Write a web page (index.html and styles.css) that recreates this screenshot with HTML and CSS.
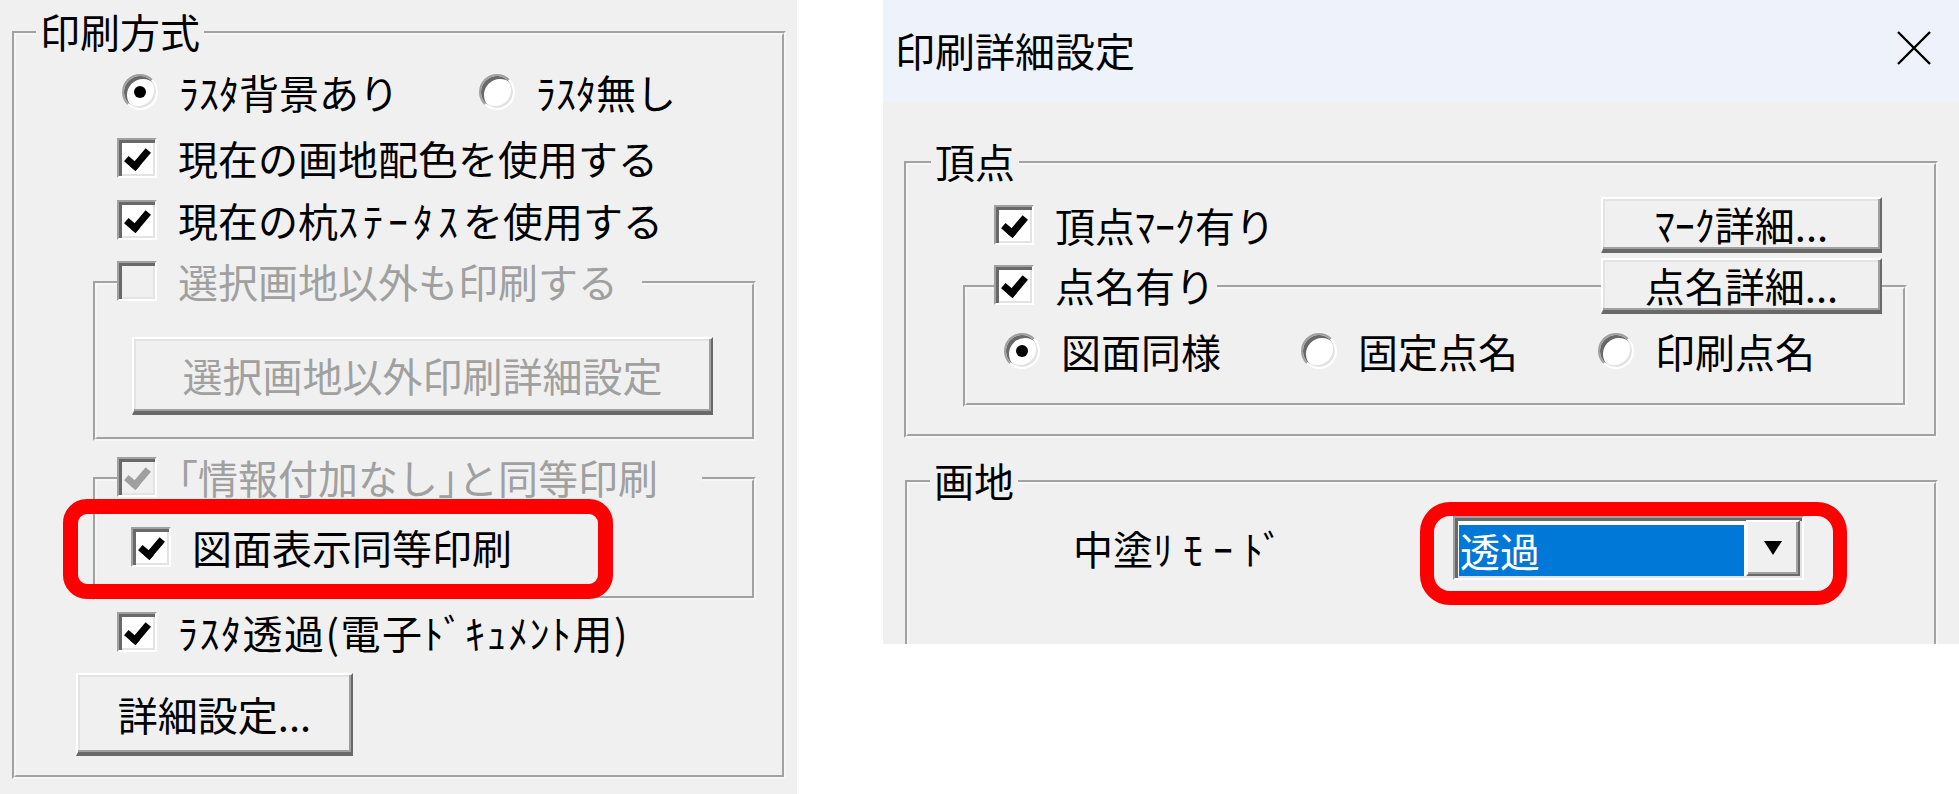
FILE: index.html
```html
<!DOCTYPE html>
<html lang="ja">

<head>
    <meta charset="UTF-8">
    <meta name="viewport" content="width=device-width, initial-scale=1.0">
    <title>印刷方式 / 印刷詳細設定</title>
    <link rel="stylesheet" href="styles.css">
</head>

<body>
    <!-- 左: 印刷方式 -->
    <div class="window print-mode">
        <fieldset class="group group-main">
            <legend class="main-legend">印刷方式</legend>

            <div class="radio-row">
                <label class="opt"><span class="radio on"></span>ﾗｽﾀ背景あり</label>
                <label class="opt"><span class="radio"></span>ﾗｽﾀ無し</label>
            </div>

            <label class="check-row row-color"><span class="check on"></span>現在の画地配色を使用する</label>
            <label class="check-row row-status"><span class="check on"></span><span>現在の杭<span class="kana-wide">ｽﾃｰﾀｽ</span>を使用する</span></label>

            <fieldset class="group sub-other">
                <legend class="check-legend pad-a">
                    <span class="check-row disabled"><span class="check"></span>選択画地以外も印刷する</span>
                </legend>
                <button class="btn btn-other" disabled>選択画地以外印刷詳細設定</button>
            </fieldset>

            <fieldset class="group sub-same">
                <legend class="check-legend pad-b">
                    <span class="check-row disabled"><span class="check on"></span>｢情報付加なし｣と同等印刷</span>
                </legend>
                <label class="check-row row-view"><span class="check on"></span>図面表示同等印刷</label>
            </fieldset>

            <label class="check-row row-raster"><span class="check on"></span><span class="raster-text">ﾗｽﾀ透過(電子ﾄﾞｷｭﾒﾝﾄ用)</span></label>

            <button class="btn btn-detail">詳細設定...</button>
        </fieldset>

        <!-- 赤枠 -->
        <div class="mark mark-view"></div>
    </div>

    <!-- 右: 印刷詳細設定 -->
    <div class="window detail">
        <div class="titlebar">
            <span class="title">印刷詳細設定</span>
            <svg class="close" width="36" height="36" viewBox="0 0 36 36">
                <path d="M2 2 L34 34 M34 2 L2 34" stroke="#000" stroke-width="2.4" fill="none" />
            </svg>
        </div>

        <div class="dialog-body">
            <fieldset class="group group-vertex">
                <legend class="vertex-legend">頂点</legend>
                <div class="vertex-grid">
                    <label class="check-row row-mark"><span class="check on"></span>頂点ﾏｰｸ有り</label>
                    <button class="btn btn-side">ﾏｰｸ詳細...</button>

                    <fieldset class="group group-name">
                        <legend class="check-legend pad-c">
                            <span class="check-row"><span class="check on"></span>点名有り</span>
                        </legend>
                        <div class="radio-row name-radios">
                            <label class="opt"><span class="radio on"></span>図面同様</label>
                            <label class="opt"><span class="radio"></span>固定点名</label>
                            <label class="opt"><span class="radio"></span>印刷点名</label>
                        </div>
                    </fieldset>
                    <button class="btn btn-side btn-name">点名詳細...</button>
                </div>
            </fieldset>

            <fieldset class="group group-fill">
                <legend class="fill-legend">画地</legend>
                <div class="fill-row">
                    <span class="fill-label">中塗<span class="kana-wide fill-kana">ﾘﾓｰ</span>ﾄﾞ</span>
                    <div class="combo">
                        <span class="combo-value">透過</span>
                        <span class="combo-arrow">
                            <svg width="20" height="16" viewBox="0 0 20 16">
                                <path d="M1 1 H19 L10 15 Z" fill="#000" />
                            </svg>
                        </span>
                    </div>
                </div>
            </fieldset>
        </div>

        <!-- 赤枠 -->
        <div class="mark mark-combo"></div>
    </div>
</body>

</html>
```

FILE: styles.css
```css
body {
    margin: 0;
    background: #fff;
    display: flex;
    align-items: flex-start;
    gap: 86px;
    font-family: "Noto Sans CJK JP", sans-serif;
    font-size: 40px;
    line-height: 40px;
    color: #000;
    overflow: hidden;
}

.window {
    position: relative;
    flex: none;
    background: #f0f0f0;
    overflow: hidden;
}

/* グループ枠 */
.group {
    border: 4px groove #f6f6f6;
    margin: 0;
    padding: 0;
    min-width: 0;
    box-sizing: border-box;
}

.group > legend {
    padding: 0 4px 4px;
    line-height: 40px;
}

.group > legend.check-legend {
    padding-left: 0;
}

/* 半角カナの字間 */
.kana-wide {
    letter-spacing: 5px;
}

.raster-text {
    letter-spacing: 1.5px;
}

/* チェックボックス */
.check-row {
    display: flex;
    align-items: center;
    gap: 21px;
    height: 40px;
    white-space: nowrap;
}

.check {
    width: 40px;
    height: 40px;
    box-sizing: border-box;
    border: 2px solid;
    border-color: #a0a0a0 #fff #fff #a0a0a0;
    box-shadow: inset 3px 3px 0 #696969, inset -2px -2px 0 #e3e3e3;
    background: #fff;
    position: relative;
    flex: none;
}

.check.on::after {
    content: "";
    position: absolute;
    left: 11px;
    top: 5px;
    width: 8px;
    height: 17px;
    border: solid #000;
    border-width: 0 7px 7px 0;
    transform: rotate(40deg);
    transform-origin: center;
}

.disabled {
    color: #a0a0a0;
}

.disabled .check {
    background: #f0f0f0;
}

.disabled .check.on::after {
    border-color: #a0a0a0;
}

/* ラジオボタン */
.radio-row {
    display: flex;
    align-items: center;
    gap: 80px;
    height: 40px;
}

.opt {
    display: flex;
    align-items: center;
    gap: 21px;
    white-space: nowrap;
}

.radio {
    width: 36px;
    height: 36px;
    box-sizing: border-box;
    border-radius: 50%;
    border: 2px solid;
    border-color: #a0a0a0 #fff #fff #a0a0a0;
    box-shadow: inset 3px 3px 0 #696969, inset -2px -2px 0 #e3e3e3;
    background: #fff;
    position: relative;
    flex: none;
}

.radio.on::after {
    content: "";
    position: absolute;
    left: 10px;
    top: 10px;
    width: 12px;
    height: 12px;
    border-radius: 50%;
    background: #000;
}

/* ボタン */
.btn {
    display: block;
    box-sizing: border-box;
    font: inherit;
    color: #000;
    background: #f0f0f0;
    border: 2px solid;
    border-color: #fff #696969 #696969 #fff;
    border-bottom-width: 4px;
    box-shadow: inset -2px -2px 0 #a0a0a0, inset 2px 2px 0 #e3e3e3;
    padding: 0;
    text-align: center;
    white-space: nowrap;
}

.btn:disabled {
    color: #a0a0a0;
}

/* 左: 印刷方式 */
.print-mode {
    width: 797px;
    height: 794px;
}

.group-main {
    margin: 11px 11px 0 12px;
    height: 768px;
}

.main-legend {
    margin-left: 20px;
}

.group-main > .radio-row {
    margin: 17px 0 0 106px;
}

.group-main > .check-row {
    margin-left: 101px;
}

.row-color {
    margin-top: 26px;
}

.row-status {
    margin-top: 22px;
}

.sub-other {
    margin: 21px 26px 0 77px;
    height: 180px;
}

.sub-same {
    margin: 16px 26px 0 77px;
    height: 143px;
}

.group > .pad-a {
    margin-left: 20px;
    padding-right: 24px;
}

.group > .pad-b {
    margin-left: 20px;
    padding-right: 44px;
}

.btn-other {
    margin: 32px 0 0 35px;
    width: 581px;
    height: 78px;
}

.row-view {
    margin: 26px 0 0 34px;
}

.group-main > .row-raster {
    margin-top: 12px;
}

.btn-detail {
    margin: 21px 0 0 60px;
    width: 277px;
    height: 83px;
}

/* 右: 印刷詳細設定 */
.detail {
    width: 1076px;
    height: 644px;
}

.titlebar {
    height: 102px;
    box-sizing: border-box;
    padding: 30px 27px 0 12px;
    background: #eef2fa;
    display: flex;
    justify-content: space-between;
    align-items: flex-start;
}

.title {
    line-height: 40px;
}

.dialog-body {
    height: 542px;
    overflow: hidden;
}

.group-vertex {
    margin: 39px 21px 0 21px;
    height: 297px;
}

.vertex-legend {
    margin-left: 23px;
}

.vertex-grid {
    display: grid;
    grid-template-columns: 1fr auto;
    row-gap: 5px;
    margin-top: 12px;
}

.row-mark {
    grid-row: 1;
    grid-column: 1;
    align-self: center;
    margin-left: 86px;
}

.btn-side {
    grid-column: 2;
    width: 281px;
    height: 56px;
    margin-right: 52px;
}

.group-name {
    grid-row: 2;
    grid-column: 1 / -1;
    margin: 7px 27px 0 55px;
    height: 142px;
}

.btn-name {
    grid-row: 2;
    align-self: start;
    position: relative;
}

.group > .pad-c {
    margin-left: 27px;
    padding-right: 2px;
}

.name-radios {
    margin: 22px 0 0 37px;
}

.group-fill {
    margin: 22px 21px 0 22px;
    height: 260px;
}

.fill-legend {
    margin-left: 21px;
}

.fill-row {
    display: flex;
    align-items: center;
    margin: 12px 0 0 164px;
}

.fill-label {
    width: 380px;
    flex: none;
    white-space: nowrap;
}

.fill-kana {
    letter-spacing: 10px;
}

/* コンボボックス */
.combo {
    display: flex;
    align-items: flex-start;
    width: 351px;
    height: 64px;
    box-sizing: border-box;
    border: 2px solid;
    border-color: #a0a0a0 #fff #fff #a0a0a0;
    box-shadow: inset 3px 3px 0 #696969, inset -2px -2px 0 #e3e3e3;
    background: #fff;
    padding: 2px;
}

.combo-value {
    width: 285px;
    height: 51px;
    margin: 5px 0 0 2px;
    background: #0078d7;
    color: #fff;
    line-height: 50px;
    padding-left: 1px;
    box-sizing: border-box;
}

.combo-arrow {
    width: 54px;
    height: 56px;
    margin-left: 2px;
    box-sizing: border-box;
    background: #f0f0f0;
    border: 2px solid;
    border-color: #fff #696969 #696969 #fff;
    box-shadow: inset -2px -2px 0 #a0a0a0;
    display: flex;
    align-items: center;
    justify-content: center;
}

/* 赤枠 */
.mark {
    position: absolute;
    box-sizing: border-box;
    border: 15px solid #f00;
    border-radius: 24px;
    pointer-events: none;
}

.mark-view {
    left: 63px;
    top: 499px;
    width: 550px;
    height: 100px;
}

.mark-combo {
    left: 537px;
    top: 502px;
    width: 427px;
    height: 103px;
    border-width: 14px;
    border-radius: 30px;
}
```
